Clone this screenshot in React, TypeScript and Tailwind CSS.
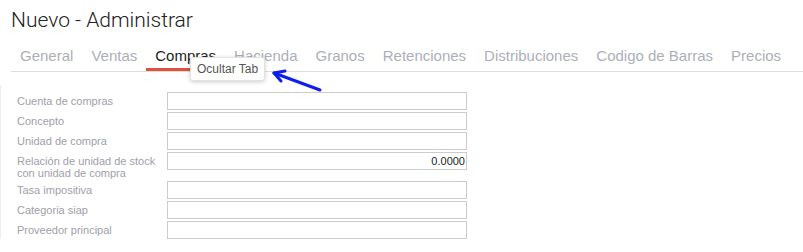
const tabs = [
  "General",
  "Ventas",
  "Compras",
  "Hacienda",
  "Granos",
  "Retenciones",
  "Distribuciones",
  "Codigo de Barras",
  "Precios",
];

type Field = { label: string; value?: string };

const fields: Field[] = [
  { label: "Cuenta de compras" },
  { label: "Concepto" },
  { label: "Unidad de compra" },
  { label: "Relación de unidad de stock con unidad de compra", value: "0.0000" },
  { label: "Tasa impositiva" },
  { label: "Categoria siap" },
  { label: "Proveedor principal" },
];

function Arrow() {
  return (
    <svg
      className="pointer-events-none absolute left-[266px] top-[66px]"
      width="60"
      height="30"
      viewBox="0 0 60 30"
    >
      <line x1="54" y1="24" x2="8" y2="7" stroke="#0d1ef0" strokeWidth="3" strokeLinecap="round" />
      <path d="M8 7 L19 5 M8 7 L15 15" stroke="#0d1ef0" strokeWidth="3" strokeLinecap="round" fill="none" />
    </svg>
  );
}

export default function App() {
  return (
    <div className="relative h-[252px] w-[803px] overflow-hidden bg-white font-['Liberation_Sans',Arial,sans-serif]">
      <h1 className="ml-[11px] pt-[8px] font-['Roboto',sans-serif] text-[21px] font-light leading-[25px] text-[#222]">
        Nuevo - Administrar
      </h1>

      <ul className="ml-[11px] mt-[14px] flex border-b border-[#ddd]">
        {tabs.map((t) => (
          <li
            key={t}
            className={`border-b-[3px] px-[9px] pb-[3px] text-[15px] leading-[18px] ${
              t === "Compras" ? "border-[#e0503b] text-[#222]" : "border-transparent text-[#adafb8]"
            }`}
          >
            {t}
          </li>
        ))}
      </ul>

      <div className="absolute left-[190px] top-[57px] rounded-[3px] border border-[#e2e2e2] bg-white px-[6px] py-[4px] text-[12px] leading-[14px] text-[#555] shadow-[0_1px_4px_rgba(0,0,0,0.2)]">
        Ocultar Tab
      </div>
      <Arrow />

      <div className="mt-[13px] flex flex-col gap-[2px] border-l border-[#eee] pt-[7px] pl-[16px] text-[11px]">
        {fields.map((f) => (
          <div key={f.label} className="flex items-start">
            <label className="w-[150px] pr-[2px] pt-[3px] leading-[12px] text-[#a0a0aa]">{f.label}</label>
            <div className="flex h-[18px] w-[300px] items-center justify-end border border-[#ccc] bg-white pr-[1px] text-[#222]">
              {f.value}
            </div>
          </div>
        ))}
      </div>
    </div>
  );
}
